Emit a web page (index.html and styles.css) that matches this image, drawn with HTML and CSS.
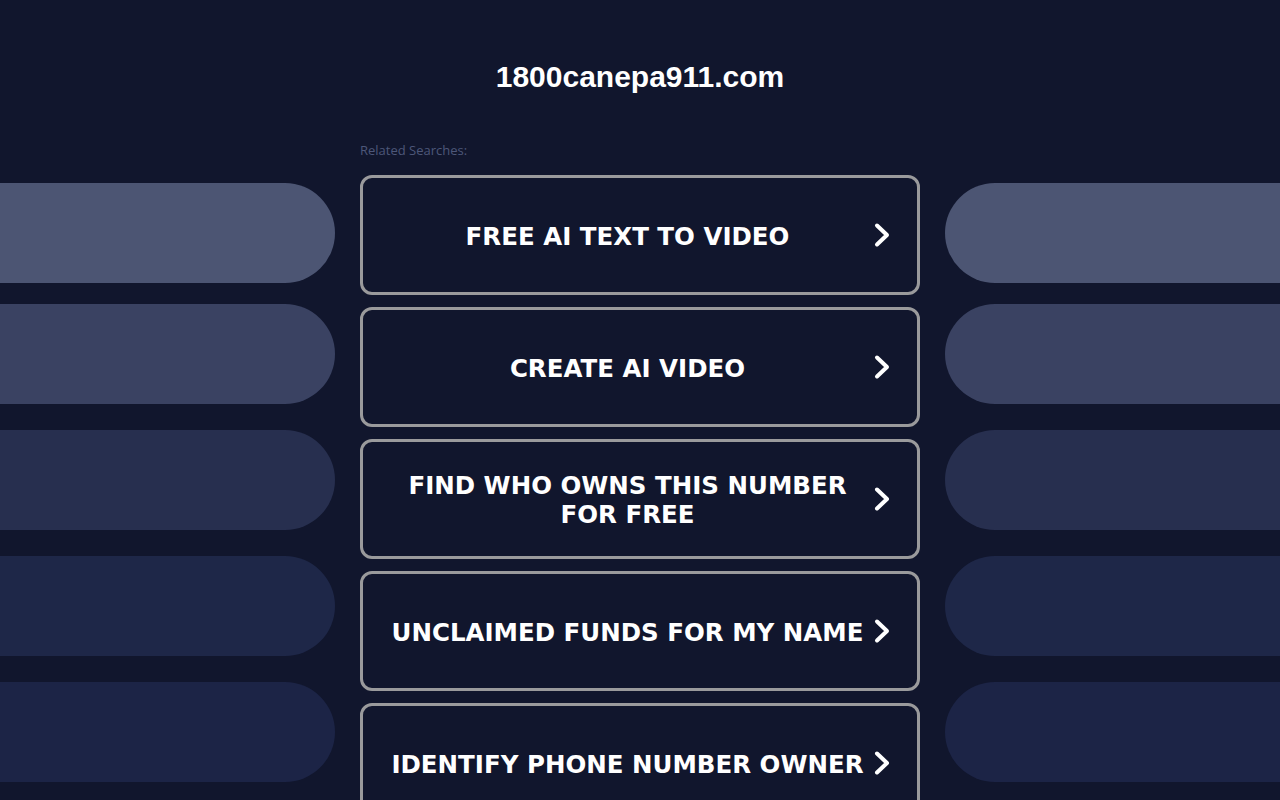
FILE: index.html
```html
<!DOCTYPE html>
<html lang="en">
<head>
<meta charset="utf-8">
<title>1800canepa911.com</title>
<link rel="stylesheet" href="styles.css">
</head>
<body>
<header class="header">
  <h1 class="domain">1800canepa911.com</h1>
</header>
<main class="layout">
  <div class="side side-left">
    <div class="pill pill-1"></div>
    <div class="pill pill-2"></div>
    <div class="pill pill-3"></div>
    <div class="pill pill-4"></div>
    <div class="pill pill-5"></div>
  </div>
  <section class="center">
    <div class="label">Related Searches:</div>
    <div class="links">
      <a class="link" href="#"><span class="link-text">FREE AI TEXT TO VIDEO</span><svg class="chev" viewBox="0 0 16 26" width="16" height="26"><polyline points="3,3.5 13,13 3,22.5"/></svg></a>
      <a class="link" href="#"><span class="link-text">CREATE AI VIDEO</span><svg class="chev" viewBox="0 0 16 26" width="16" height="26"><polyline points="3,3.5 13,13 3,22.5"/></svg></a>
      <a class="link" href="#"><span class="link-text">FIND WHO OWNS THIS NUMBER FOR FREE</span><svg class="chev" viewBox="0 0 16 26" width="16" height="26"><polyline points="3,3.5 13,13 3,22.5"/></svg></a>
      <a class="link" href="#"><span class="link-text">UNCLAIMED FUNDS FOR MY NAME</span><svg class="chev" viewBox="0 0 16 26" width="16" height="26"><polyline points="3,3.5 13,13 3,22.5"/></svg></a>
      <a class="link" href="#"><span class="link-text">IDENTIFY PHONE NUMBER OWNER</span><svg class="chev" viewBox="0 0 16 26" width="16" height="26"><polyline points="3,3.5 13,13 3,22.5"/></svg></a>
    </div>
  </section>
  <div class="side side-right">
    <div class="pill pill-1"></div>
    <div class="pill pill-2"></div>
    <div class="pill pill-3"></div>
    <div class="pill pill-4"></div>
    <div class="pill pill-5"></div>
  </div>
</main>
</body>
</html>
```

FILE: styles.css
```css
html, body {
  margin: 0;
  padding: 0;
  background: #11162d;
}

body {
  font-family: "DejaVu Sans", Verdana, sans-serif;
  color: #ffffff;
}

.header {
  padding-top: 60px;
  text-align: center;
}

.domain {
  margin: 0;
  font-family: "Liberation Sans", Arial, sans-serif;
  font-weight: 700;
  font-size: 30px;
  line-height: 34px;
  color: #ffffff;
}

.layout {
  display: grid;
  grid-template-columns: 1fr 560px 1fr;
  column-gap: 25px;
  margin-top: 48px;
}

.side {
  display: flex;
  flex-direction: column;
  gap: 26px;
  padding-top: 41px;
}

.pill {
  height: 100px;
}

.pill-2 {
  margin-top: -5px;
}

.side-left .pill {
  border-radius: 0 50px 50px 0;
}

.side-right .pill {
  border-radius: 50px 0 0 50px;
}

.pill-1 { background: #4c5573; }
.pill-2 { background: #3a4262; }
.pill-3 { background: #272f4f; }
.pill-4 { background: #1e2748; }
.pill-5 { background: #1c2446; }

.label {
  font-family: "Open Sans", "Liberation Sans", sans-serif;
  font-size: 13px;
  line-height: 17px;
  color: #4d5779;
  margin-bottom: 16px;
}

.links {
  display: flex;
  flex-direction: column;
  gap: 12px;
}

.link {
  display: flex;
  align-items: center;
  height: 120px;
  box-sizing: border-box;
  border: 3px solid #9a9a9c;
  border-radius: 12px;
  padding: 0 27px 0 28px;
  gap: 10px;
  color: #ffffff;
  text-decoration: none;
}

.link-text {
  flex: 1;
  text-align: center;
  font-family: "DejaVu Sans", Verdana, sans-serif;
  font-weight: 700;
  font-size: 24.5px;
  line-height: 29px;
  padding-top: 2px;
}

.chev {
  flex: none;
  fill: none;
  stroke: #ffffff;
  stroke-width: 4;
  stroke-linecap: round;
  stroke-linejoin: round;
}
```
